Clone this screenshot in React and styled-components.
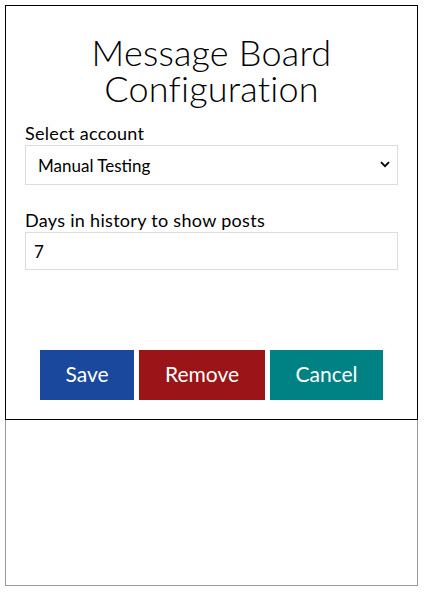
import React, { useState } from "react";
import styled, { createGlobalStyle } from "styled-components";

const GlobalStyle = createGlobalStyle`
  html, body {
    margin: 0;
    padding: 0;
    background: #ffffff;
  }
  body {
    font-family: Lato, "Open Sans", sans-serif;
    color: #000;
  }
  * {
    box-sizing: border-box;
  }
`;

const Page = styled.div`
  padding: 5px 0 0 5px;
  width: 425px;
  height: 594px;
`;

const Frame = styled.div`
  width: 413px;
  height: 581px;
  border: 1px solid #999999;
  background: #ffffff;
`;

const Dialog = styled.div`
  margin: -1px -1px 0 -1px;
  height: 415px;
  border: 1px solid #000000;
  background: #ffffff;
  padding: 28px 19px 0 19px;
  display: flex;
  flex-direction: column;
`;

const Title = styled.h1`
  margin: 0 0 16px 0;
  font-size: 36px;
  font-weight: 300;
  line-height: 36px;
  text-align: center;
  letter-spacing: 0.2px;
`;

const Field = styled.div`
  display: flex;
  flex-direction: column;
  margin-bottom: ${(p) => p.gap || 0}px;
`;

const Label = styled.label`
  font-size: 18px;
  line-height: 22px;
  margin-bottom: 1px;
  letter-spacing: 0.3px;
`;

const SelectWrap = styled.div`
  position: relative;
  height: 40px;
`;

const Select = styled.select`
  appearance: none;
  width: 100%;
  height: 40px;
  border: 1px solid #dddddd;
  background: #ffffff;
  padding: 0 30px 0 12px;
  font-family: inherit;
  font-size: 17px;
  color: #000;
  outline: none;
`;

const Chevron = styled.svg`
  position: absolute;
  right: 8px;
  top: 16px;
  pointer-events: none;
`;

const Input = styled.input`
  width: 100%;
  height: 38px;
  border: 1px solid #dddddd;
  padding: 0 8px;
  font-family: inherit;
  font-size: 17px;
  color: #000;
  outline: none;
`;

const Actions = styled.div`
  margin-top: auto;
  margin-bottom: 19px;
  display: flex;
  justify-content: center;
  gap: 5px;
`;

const Button = styled.button`
  height: 50px;
  width: ${(p) => p.w}px;
  border: none;
  background: ${(p) => p.bg};
  color: #ffffff;
  font-family: inherit;
  font-size: 21px;
  line-height: 24px;
  padding: 0 0 3px 0;
  cursor: pointer;
`;

export default function App() {
  const [account, setAccount] = useState("manual");
  const [days, setDays] = useState("7");

  return (
    <>
      <GlobalStyle />
      <Page>
        <Frame>
          <Dialog>
            <Title>
              Message Board
              <br />
              Configuration
            </Title>
            <Field gap={24}>
              <Label>Select account</Label>
              <SelectWrap>
                <Select value={account} onChange={(e) => setAccount(e.target.value)}>
                  <option value="manual">Manual Testing</option>
                </Select>
                <Chevron width="10" height="7" viewBox="0 0 10 7">
                  <path d="M1 1.2 L5 5.2 L9 1.2" fill="none" stroke="#000" strokeWidth="1.8" />
                </Chevron>
              </SelectWrap>
            </Field>
            <Field>
              <Label>Days in history to show posts</Label>
              <Input value={days} onChange={(e) => setDays(e.target.value)} />
            </Field>
            <Actions>
              <Button w={94} bg="#19489c">Save</Button>
              <Button w={126} bg="#9a1418">Remove</Button>
              <Button w={113} bg="#008284">Cancel</Button>
            </Actions>
          </Dialog>
        </Frame>
      </Page>
    </>
  );
}
